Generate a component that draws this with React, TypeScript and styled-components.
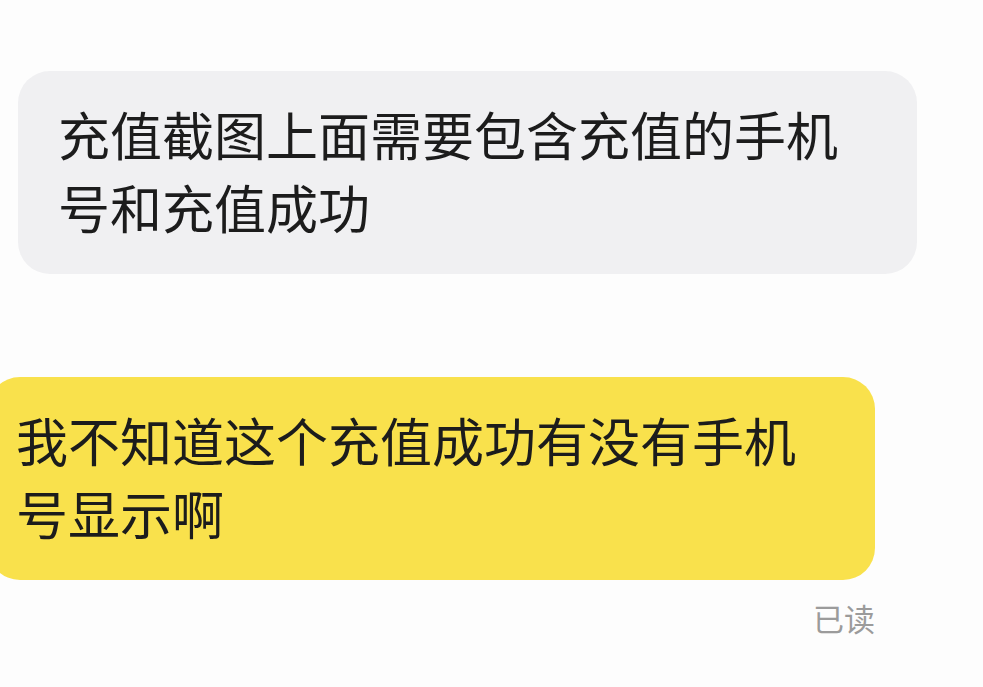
import React from 'react'
import styled, { createGlobalStyle } from 'styled-components'

const GlobalStyle = createGlobalStyle`
  html, body {
    margin: 0;
    padding: 0;
    background: #fdfdfd;
  }
  body {
    font-family: "Noto Sans CJK SC", "Noto Sans", sans-serif;
    overflow: hidden;
  }
`

const Page = styled.div`
  width: 983px;
  height: 687px;
  display: flex;
  flex-direction: column;
  padding-top: 71px;
  box-sizing: border-box;
  overflow: hidden;
`

const Bubble = styled.div<{ $mine?: boolean }>`
  box-sizing: border-box;
  font-size: 52px;
  line-height: 73px;
  color: #1c1c1c;
  border-radius: 32px;
  background: ${({ $mine }) => ($mine ? '#f9e14c' : '#f0f0f2')};
  width: ${({ $mine }) => ($mine ? '887px' : '899px')};
  margin-left: ${({ $mine }) => ($mine ? '-12px' : '18px')};
  margin-top: ${({ $mine }) => ($mine ? '103px' : '0')};
  padding: ${({ $mine }) => ($mine ? '26px 60px 31px 28px' : '26px 40px 31px 40px')};
`

const ReceiptRow = styled.div`
  display: flex;
  justify-content: flex-end;
  width: 875px;
  margin-top: 19px;
`

const Receipt = styled.span`
  font-size: 31px;
  line-height: 38px;
  color: #9b9b9b;
`

export default function App() {
  return (
    <>
      <GlobalStyle />
      <Page>
        <Bubble>充值截图上面需要包含充值的手机号和充值成功</Bubble>
        <Bubble $mine>我不知道这个充值成功有没有手机号显示啊</Bubble>
        <ReceiptRow>
          <Receipt>已读</Receipt>
        </ReceiptRow>
      </Page>
    </>
  )
}
